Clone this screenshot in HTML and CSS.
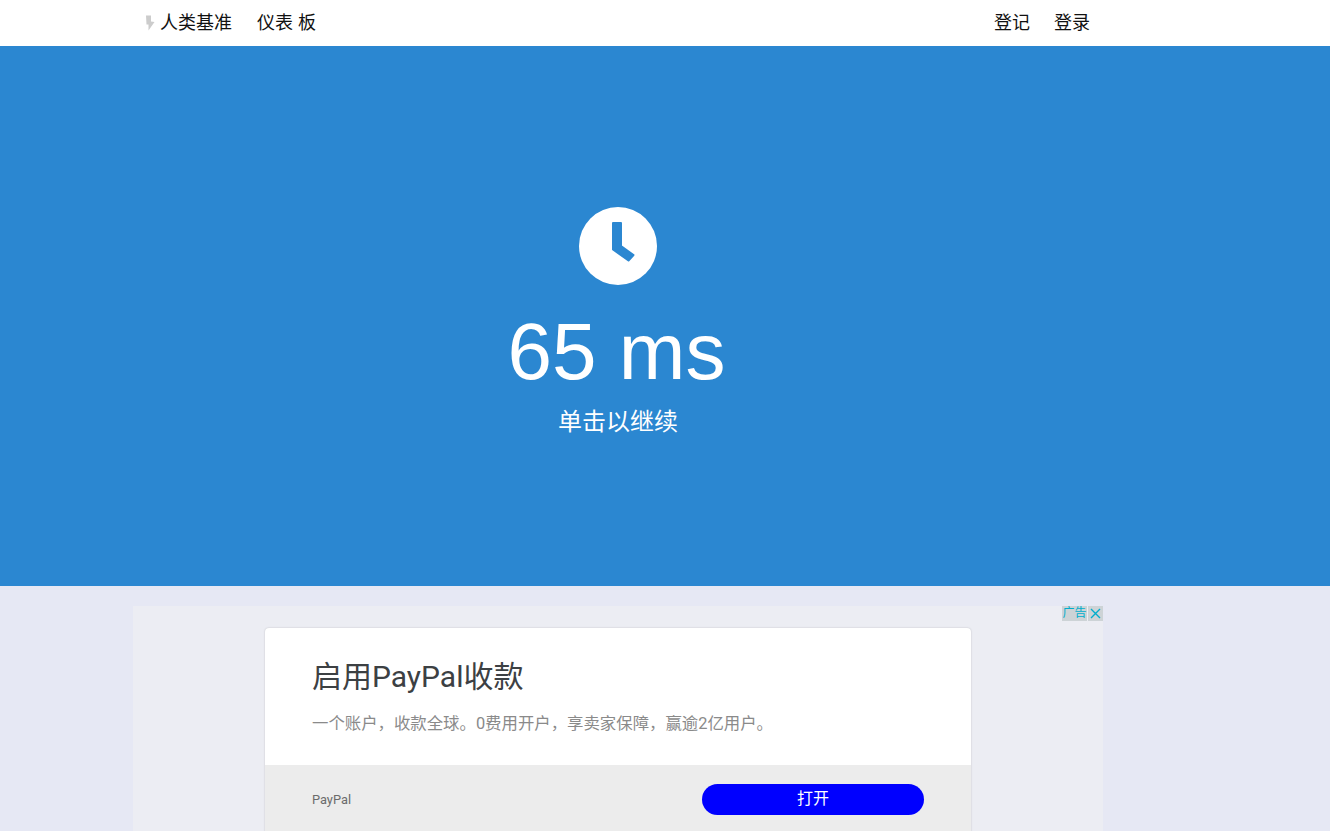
FILE: index.html
```html
<!DOCTYPE html>
<html lang="zh-CN">

<head>
    <meta charset="UTF-8">
    <title>人类基准</title>
    <link rel="stylesheet" href="styles.css">
</head>

<body>

<!-- top navigation -->
<nav class="top-nav">
    <div class="nav-left">
        <a class="nav-brand" href="#">
            <svg class="brand-bolt" viewBox="0 0 10 16" width="10" height="16">
                <path d="M1 0.5 L6 0.5 L6 6.5 L9.5 7 L3.5 15.5 L3.5 9.5 L1.5 9.5 Z" fill="#cccccc"/>
            </svg>
            人类基准
        </a>
        <a href="#">仪表 板</a>
    </div>
    <div class="nav-right">
        <a href="#">登记</a>
        <a href="#">登录</a>
    </div>
</nav>

<!-- result area -->
<section class="hero">
    <svg class="hero-clock" viewBox="0 0 78 78" width="78" height="78">
        <circle cx="39" cy="39" r="39" fill="#ffffff"/>
        <path d="M34 16 H42 V39 L54.5 48 L49.5 53.5 L34 42.5 Z" fill="#2b87d1" stroke="#2b87d1" stroke-width="2" stroke-linejoin="round"/>
    </svg>
    <div class="hero-result">65 ms</div>
    <div class="hero-hint">单击以继续</div>
</section>

<!-- advertisement -->
<section class="ad-section">
    <div class="ad-box">
        <div class="ad-badge">
            <span class="ad-label">广告</span>
            <span class="ad-close">
                <svg viewBox="0 0 15 15" width="15" height="15">
                    <path d="M3 3 L12 12 M12 3 L3 12" stroke="#00aecd" stroke-width="1.4" fill="none"/>
                </svg>
            </span>
        </div>
        <div class="ad-card">
            <div class="ad-body">
                <h2>启用PayPal收款</h2>
                <p>一个账户，收款全球。0费用开户，享卖家保障，赢逾2亿用户。</p>
            </div>
            <div class="ad-footer">
                <span class="ad-brand">PayPal</span>
                <button class="ad-open">打开</button>
            </div>
        </div>
    </div>
</section>

</body>

</html>
```

FILE: styles.css
```css
html, body {
    height: 100%;
    overflow: hidden;
}

body {
    margin: 0;
    background-color: #e6e8f4;
    font-family: "Liberation Sans", "Noto Sans CJK SC", sans-serif;
    color: #111111;
}

a {
    color: inherit;
    text-decoration: none;
}

.top-nav {
    height: 46px;
    box-sizing: border-box;
    display: flex;
    align-items: center;
    justify-content: space-between;
    padding: 0 240px 4px 145px;
    background-color: #ffffff;
    font-size: 18px;
}

.nav-left {
    display: flex;
    gap: 25px;
}

.nav-right {
    display: flex;
    gap: 24px;
}

.nav-brand {
    display: flex;
    align-items: center;
    gap: 5px;
}

.brand-bolt {
    position: relative;
    top: 2px;
}

.hero {
    height: 540px;
    box-sizing: border-box;
    padding: 161px 94px 0 0;
    display: flex;
    flex-direction: column;
    align-items: center;
    background-color: #2b87d1;
    color: #ffffff;
}

.hero-result {
    margin: 21px 3px 0 0;
    font-size: 80px;
    line-height: 92px;
}

.hero-hint {
    margin-top: 8px;
    font-size: 24px;
    line-height: 32px;
}

.ad-section {
    padding: 20px 0 0 133px;
}

.ad-box {
    position: relative;
    width: 970px;
    height: 250px;
    box-sizing: border-box;
    padding-top: 22px;
    background-color: #ecedf3;
}

.ad-badge {
    position: absolute;
    top: 0;
    right: 0;
    display: flex;
    gap: 1px;
}

.ad-label, .ad-close {
    height: 15px;
    background-color: #cdd3d6;
    color: #00aecd;
    font-size: 12px;
    line-height: 15px;
}

.ad-label {
    width: 25px;
    text-align: center;
}

.ad-close {
    width: 15px;
}

.ad-close svg {
    display: block;
}

.ad-card {
    width: 706px;
    height: 228px;
    margin-left: 132px;
    border-radius: 4px;
    overflow: hidden;
    background-color: #ffffff;
    box-shadow: 0 0 2px rgba(0, 0, 0, .2);
}

.ad-body {
    height: 137px;
    box-sizing: border-box;
    padding: 29px 47px 0;
}

.ad-body h2 {
    margin: 0;
    font-family: Roboto, "Noto Sans CJK SC", sans-serif;
    font-size: 30px;
    line-height: 40px;
    font-weight: 400;
    color: #3c4043;
}

.ad-body p {
    margin: 16px 0 0;
    font-family: Roboto, "Noto Sans CJK SC", sans-serif;
    font-size: 16.4px;
    line-height: 22px;
    color: #8a8a8a;
}

.ad-footer {
    height: 91px;
    box-sizing: border-box;
    display: flex;
    justify-content: space-between;
    align-items: flex-start;
    padding: 19px 47px 0;
    background-color: #ececec;
}

.ad-brand {
    font-family: Roboto, sans-serif;
    font-size: 12.8px;
    line-height: 32px;
    color: #6b6b6b;
}

.ad-open {
    width: 222px;
    height: 31px;
    padding: 0 0 5px;
    border: none;
    border-radius: 16px;
    background-color: #0000ff;
    color: #ffffff;
    font-family: Roboto, "Noto Sans CJK SC", sans-serif;
    font-size: 16px;
}
```
